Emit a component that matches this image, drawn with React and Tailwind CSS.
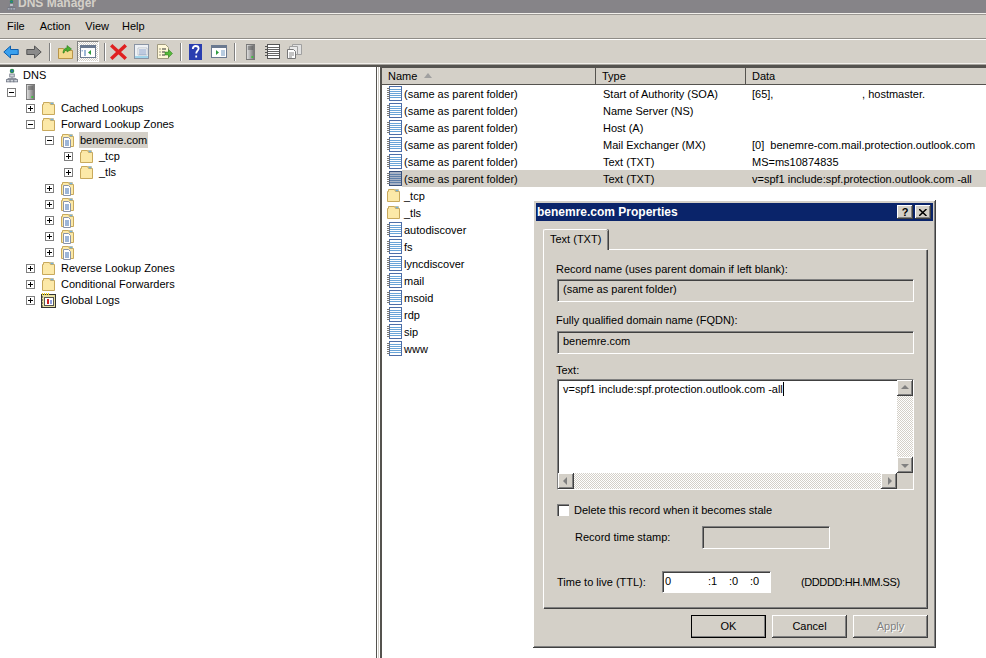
import React from 'react';

function Folder() {
  return (
    <svg width="15" height="15" viewBox="0 0 15 15" className="shrink-0">
      <path d="M1.5 13.5V3.5h1V1.5h6l1 2h4v10z" fill="#fbe7a6" stroke="#c8a95c" />
      <path d="M2.5 4.5h10v8h-10z" fill="#fce9a8" />
      <path d="M9 1.5h3.5v2H10z" fill="#6fb0e0" stroke="#c8a95c" strokeWidth="0.5" />
    </svg>
  );
}

function ZoneFolder() {
  return (
    <svg width="15" height="15" viewBox="0 0 15 15" className="shrink-0">
      <path d="M1.5 13.5V3.5h1V1.5h6l1 2h4v10z" fill="#fce9a8" stroke="#c8a95c" />
      <path d="M9 1.5h3.5v2H10z" fill="#6fb0e0" stroke="#c8a95c" strokeWidth="0.5" />
      <path d="M3.5 4.5h5l2 2v8h-7z" fill="#fff" stroke="#8a94a8" />
      <path d="M5 8h4M5 10h4M5 12h4" stroke="#3a6db0" />
    </svg>
  );
}

function RecordIcon({ selected }) {
  const line = selected ? '#5f7fa8' : '#6aa5d8';
  const body = selected ? '#a9b4c6' : '#fff';
  return (
    <svg width="15" height="15" viewBox="0 0 15 15" className="shrink-0">
      <rect x="2.5" y="0.5" width="12" height="14" fill={body} stroke={selected ? '#38507c' : '#4d6ea8'} />
      <path d="M3 3.5h11M3 5.5h11M3 7.5h11M3 9.5h11M3 11.5h11" stroke={line} />
      <path d="M0 2.5h3M0 4.5h3M0 6.5h3M0 8.5h3M0 10.5h3M0 12.5h3" stroke="#777" />
    </svg>
  );
}

function ServerIcon() {
  return (
    <svg width="9" height="16" viewBox="0 0 10 16" preserveAspectRatio="none" className="shrink-0">
      <defs>
        <linearGradient id="tower" x1="0" x2="1" y1="0" y2="0">
          <stop offset="0" stopColor="#e4e4e4" />
          <stop offset="1" stopColor="#6e6e6e" />
        </linearGradient>
      </defs>
      <rect x="0.5" y="0.5" width="9" height="15" fill="url(#tower)" stroke="#777" />
      <path d="M2 3h6M2 5h6" stroke="#555" />
      <rect x="6" y="12" width="2" height="2" fill="#3fc03f" />
    </svg>
  );
}

function DnsIcon({ w = 12, h = 15 }) {
  return (
    <svg width={w} height={h} viewBox="0 0 16 18" className="shrink-0">
      <circle cx="8" cy="3" r="3" fill="#2f8f4f" />
      <path d="M6.5 2h3v2h-3z" fill="#2a6fc0" />
      <rect x="5" y="7" width="6" height="4" fill="#cfd3da" stroke="#6b7280" />
      <path d="M8 11v2M2.5 15v-2h11v2" stroke="#6b7280" fill="none" />
      <rect x="0.5" y="14.5" width="5" height="3" fill="#cfd3da" stroke="#6b7280" />
      <rect x="5.5" y="14.5" width="5" height="3" fill="#cfd3da" stroke="#6b7280" />
      <rect x="10.5" y="14.5" width="5" height="3" fill="#cfd3da" stroke="#6b7280" />
    </svg>
  );
}

function LogIcon() {
  return (
    <svg width="15" height="15" viewBox="0 0 15 15" className="shrink-0">
      <rect x="0.5" y="1.5" width="14" height="13" fill="#e8e0a0" stroke="#333" />
      <path d="M1 1h8" stroke="#f0d020" strokeWidth="2" strokeDasharray="1 1" />
      <rect x="3.5" y="4.5" width="9" height="8" fill="#fff" stroke="#555" />
      <path d="M7 6v5" stroke="#d02020" strokeWidth="2" />
      <path d="M10 7v4" stroke="#2040c0" />
      <path d="M1 4h1M1 7h1M1 10h1M1 13h1" stroke="#333" />
    </svg>
  );
}

function Expander({ open }) {
  return (
    <span className="relative block w-[9px] h-[9px] shrink-0 border border-[#808080] bg-white">
      <span className="absolute left-[1px] top-[3px] w-[5px] h-px bg-black" />
      {!open && <span className="absolute left-[3px] top-[1px] w-px h-[5px] bg-black" />}
    </span>
  );
}

const treeRows = [
  { level: 0, icon: 'server', open: true },
  { level: 1, icon: 'folder', label: 'Cached Lookups' },
  { level: 1, icon: 'folder', label: 'Forward Lookup Zones', open: true },
  { level: 2, icon: 'zone', label: 'benemre.com', open: true, active: true },
  { level: 3, icon: 'folder', label: '_tcp' },
  { level: 3, icon: 'folder', label: '_tls' },
  { level: 2, icon: 'zone' },
  { level: 2, icon: 'zone' },
  { level: 2, icon: 'zone' },
  { level: 2, icon: 'zone' },
  { level: 2, icon: 'zone' },
  { level: 1, icon: 'folder', label: 'Reverse Lookup Zones' },
  { level: 1, icon: 'folder', label: 'Conditional Forwarders' },
  { level: 1, icon: 'log', label: 'Global Logs' },
];

const levelPad = ['pl-[7px]', 'pl-[26px]', 'pl-[45px]', 'pl-[64px]'];

function TreeRow({ row }) {
  return (
    <div className={`flex items-center h-4 ${levelPad[row.level]}`}>
      <Expander open={row.open} />
      {row.icon === 'server' && <span className="ml-[10px]"><ServerIcon /></span>}
      {row.icon === 'folder' && <span className="ml-[6px]"><Folder /></span>}
      {row.icon === 'zone' && <span className="ml-[6px]"><ZoneFolder /></span>}
      {row.icon === 'log' && <span className="ml-[6px]"><LogIcon /></span>}
      {row.label && (
        <span className={`ml-[4px] px-[1px] leading-4 ${row.active ? 'bg-[#d4d0c8]' : ''}`}>{row.label}</span>
      )}
    </div>
  );
}

const same = '(same as parent folder)';
const records = [
  { name: same, type: 'Start of Authority (SOA)', data: '[65],                             , hostmaster.' },
  { name: same, type: 'Name Server (NS)' },
  { name: same, type: 'Host (A)' },
  { name: same, type: 'Mail Exchanger (MX)', data: '[0]  benemre-com.mail.protection.outlook.com' },
  { name: same, type: 'Text (TXT)', data: 'MS=ms10874835' },
  { name: same, type: 'Text (TXT)', data: 'v=spf1 include:spf.protection.outlook.com -all', selected: true },
  { name: '_tcp', folder: true },
  { name: '_tls', folder: true },
  { name: 'autodiscover' },
  { name: 'fs' },
  { name: 'lyncdiscover' },
  { name: 'mail' },
  { name: 'msoid' },
  { name: 'rdp' },
  { name: 'sip' },
  { name: 'www' },
];

function RecordRow({ rec }) {
  return (
    <div className="flex items-center h-[17px] pl-[5px]">
      <span className="w-[15px] shrink-0">
        {rec.folder ? <span className="block -ml-px"><Folder /></span> : <RecordIcon selected={rec.selected} />}
      </span>
      <div className={`flex-1 grid grid-cols-[194px_150px_1fr] h-[17px] leading-[19px] whitespace-pre ${rec.selected ? 'bg-[#d4d0c8]' : ''}`}>
        <span className="pl-[2px]">{rec.name}</span>
        <span className="pl-[7px]">{rec.type}</span>
        <span className="pl-[6px]">{rec.data}</span>
      </div>
    </div>
  );
}

function ToolIcon({ children, pressed, className = '' }) {
  return (
    <span className={`flex items-center justify-center shrink-0 h-[21px] ${className} ${pressed ? 'border border-t-[#808080] border-l-[#808080] border-r-white border-b-white bg-[repeating-conic-gradient(#d4d0c8_0_25%,#fff_0_50%)] bg-[length:2px_2px]' : ''}`}>
      {children}
    </span>
  );
}

function ToolSep({ className = '' }) {
  return <span className={`shrink-0 w-[2px] h-[18px] border-l border-[#808080] bg-white ${className}`} />;
}

function Toolbar() {
  return (
    <div className="flex items-center h-[23px] pl-[3px]">
      <ToolIcon className="w-4">
        <svg width="16" height="14" viewBox="0 0 16 14"><path d="M.8 7 7.500 1v3.500h7.700v5H7.500V13z" fill="#39a0ee" stroke="#0d5fae" /></svg>
      </ToolIcon>
      <ToolIcon className="w-4 ml-[7px]">
        <svg width="16" height="14" viewBox="0 0 16 14"><path d="M15.200 7 8.500 1v3.500H.8v5h7.700V13z" fill="#8a8a8a" stroke="#555" /></svg>
      </ToolIcon>
      <ToolSep className="ml-[7px]" />
      <ToolIcon className="w-[15px] ml-[7px]">
        <svg width="15" height="15" viewBox="0 0 15 15">
          <path d="M.5 14.500v-10h5l1 2h8v8z" fill="#f3d88c" stroke="#b8954a" />
          <path d="M5 9c0-3 1.500-5 4-5V1.500L13.500 5 9 8V6C7.500 6 6.500 7 6 9z" fill="#49b02e" stroke="#2e7a1c" strokeWidth="0.6" />
        </svg>
      </ToolIcon>
      <ToolIcon pressed className="w-[22px] ml-[4px]">
        <svg width="16" height="13" viewBox="0 0 16 13">
          <rect x="0.500" y="0.500" width="15" height="12" fill="#fff" stroke="#6b7a90" />
          <path d="M1 1h14v2H1z" fill="#6b7a90" />
          <path d="M4 5h2v6H4zM1.500 5h1.500v1.500H1.500z" fill="#9db8d8" />
          <path d="M11 5v5L8 7.500z" fill="#2e9a3c" />
        </svg>
      </ToolIcon>
      <ToolSep className="ml-[5px]" />
      <ToolIcon className="w-[17px] ml-[4px]">
        <svg width="17" height="16" viewBox="0 0 17 16"><path d="M2.500 2.500 14.500 13.500M14.500 2.500 2.500 13.500" stroke="#e02020" strokeWidth="3.500" strokeLinecap="square" /></svg>
      </ToolIcon>
      <ToolIcon className="w-[15px] ml-[7px]">
        <svg width="15" height="15" viewBox="0 0 15 15">
          <rect x="0.500" y="0.500" width="14" height="14" fill="#eef1f5" stroke="#8a94a4" />
          <path d="M4 4h9v7H4z" fill="#fff" stroke="#a0a8b4" strokeWidth="0.6" />
          <path d="M5 6h7M5 8h7M5 10h7" stroke="#5a7ab0" strokeWidth="0.8" />
          <path d="M1 13h13" stroke="#55b8e0" />
        </svg>
      </ToolIcon>
      <ToolIcon className="w-4 ml-[8px]">
        <svg width="16" height="15" viewBox="0 0 16 15">
          <path d="M.5.500h8l3 3v11H.5z" fill="#fff8d8" stroke="#a09a80" />
          <path d="M2.500 5h1M5 5h4M2.500 8h1M5 8h3M2.500 11h1M5 11h3" stroke="#333" />
          <path d="M8 8h3.500V5.500L15.500 9.500l-4 4V11H8z" fill="#55b83a" stroke="#2e7a1c" strokeWidth="0.5" />
        </svg>
      </ToolIcon>
      <ToolSep className="ml-[7px]" />
      <ToolIcon className="w-[13px] ml-[7px]">
        <svg width="13" height="16" viewBox="0 0 13 16">
          <rect width="13" height="16" fill="#2a3eb0" />
          <path d="M3.800 5C3.800 3 5 2 6.700 2 8.500 2 9.600 3 9.600 4.500 9.600 6.500 7.200 6.800 7.200 9.500M7.200 11.500v2" stroke="#fff" strokeWidth="1.800" fill="none" />
        </svg>
      </ToolIcon>
      <ToolIcon className="w-4 ml-[9px]">
        <svg width="16" height="13" viewBox="0 0 16 13">
          <rect x="0.500" y="0.500" width="15" height="12" fill="#fff" stroke="#6b7a90" />
          <path d="M1 1h14v2H1z" fill="#6b7a90" />
          <path d="M5 5v5l3-2.500z" fill="#2e9a3c" />
          <path d="M10 5h4v6h-4z" fill="#b8cce0" />
        </svg>
      </ToolIcon>
      <ToolSep className="ml-[7px]" />
      <ToolIcon className="w-[10px] ml-[9px]"><ServerIcon /></ToolIcon>
      <ToolIcon className="w-[15px] ml-[10px]">
        <svg width="15" height="15" viewBox="0 0 15 15">
          <rect x="2.500" y="0.500" width="12" height="14" fill="#fff" stroke="#555" />
          <path d="M3 3.500h11M3 5.500h11M3 7.500h11M3 9.500h11M3 11.500h11" stroke="#666" />
          <path d="M0 2.500h3M0 5.500h3M0 8.500h3M0 11.500h3" stroke="#555" />
        </svg>
      </ToolIcon>
      <ToolIcon className="w-[15px] ml-[7px]">
        <svg width="15" height="15" viewBox="0 0 15 15">
          <path d="M5.500.500h9v10h-9z" fill="#e2e2e2" stroke="#a0a0a0" />
          <path d="M2.500 2.500h8v8h-8z" fill="#eaeaea" stroke="#a0a0a0" />
          <path d="M.500 5.500h6l2 2v7h-8z" fill="#fff" stroke="#777" />
          <path d="M2 9h5M2 11h5M2 13h3" stroke="#888" />
        </svg>
      </ToolIcon>
    </div>
  );
}

const sunken = 'border-t border-l border-t-[#808080] border-l-[#808080] border-r border-b border-r-white border-b-white shadow-[inset_1px_1px_0_#404040]';
const raised = 'shadow-[inset_-1px_-1px_0_#404040,inset_1px_1px_0_#fff,inset_-2px_-2px_0_#808080]';
const hatch = 'bg-[repeating-conic-gradient(#d4d0c8_0_25%,#fff_0_50%)] bg-[length:2px_2px]';

function ScrollBtn({ dir }) {
  const points = { up: '4,9 8,5 12,9', down: '4,7 8,11 12,7', left: '9,4 5,8 9,12', right: '7,4 11,8 7,12' };
  return (
    <span className={`block w-4 h-[16px] shrink-0 bg-[#d4d0c8] ${raised}`}>
      <svg width="16" height="16" viewBox="0 0 16 16"><polygon points={points[dir]} fill="#808080" /></svg>
    </span>
  );
}

function DialogButton({ children, strong, disabled }) {
  return (
    <span className={`flex items-center justify-center w-[75px] h-[23px] bg-[#d4d0c8] ${raised} ${strong ? 'outline outline-1 -outline-offset-1 outline-black' : ''} ${disabled ? 'text-[#808080] [text-shadow:1px_1px_0_#fff]' : ''}`}>
      {children}
    </span>
  );
}

function PropertiesDialog() {
  return (
    <div className={`absolute left-[533px] top-[200px] w-[403px] h-[448px] bg-[#d4d0c8] p-[3px] ${raised}`}>
      <div className="flex items-center justify-between h-[18px] bg-[#0a246a] pl-[1px] pr-[2px] text-white font-bold text-[12px]">
        <span>benemre.com Properties</span>
        <span className="flex gap-[2px]">
          <span className={`flex items-center justify-center w-4 h-[14px] bg-[#d4d0c8] text-black text-[11px] ${raised}`}>?</span>
          <span className={`flex items-center justify-center w-4 h-[14px] bg-[#d4d0c8] ${raised}`}>
            <svg width="8" height="7" viewBox="0 0 8 7"><path d="M0 0 7.500 7M7.500 0 0 7" stroke="#000" strokeWidth="1.500" /></svg>
          </span>
        </span>
      </div>
      <div className="ml-[7px] mt-[8px]">
        <div className="relative z-10 flex items-center w-[65px] h-[21px] -mb-px pl-[6px] pb-[2px] bg-[#d4d0c8] border-t border-l border-white rounded-t-[2px] shadow-[inset_-1px_0_0_#808080,1px_0_0_#404040]">
          Text (TXT)
        </div>
        <div className="w-[384px] h-[359px] px-[12px] pt-[12px] border-t border-l border-white shadow-[1px_1px_0_#404040,inset_-1px_-1px_0_#808080]">
          <div className="h-[14px] leading-[14px]">Record name (uses parent domain if left blank):</div>
          <div className={`ml-px mt-[3px] w-[357px] h-[23px] pl-[5px] leading-[18px] ${sunken}`}>{same}</div>
          <div className="mt-[11px] h-[14px] leading-[14px]">Fully qualified domain name (FQDN):</div>
          <div className={`ml-px mt-[4px] w-[357px] h-[23px] pl-[5px] leading-[18px] ${sunken}`}>benemre.com</div>
          <div className="mt-[9px] h-[14px] leading-[14px]">Text:</div>
          <div className={`ml-px mt-[2px] w-[357px] h-[111px] bg-white flex flex-col ${sunken}`}>
            <div className="flex flex-1 min-h-0">
              <div className="flex-1 pl-[5px] pt-[2px] leading-[14px]">
                v=spf1 include:spf.protection.outlook.com -all<span className="inline-block align-top w-px h-[14px] bg-black" />
              </div>
              <div className="flex flex-col w-4">
                <ScrollBtn dir="up" />
                <div className={`flex-1 ${hatch}`} />
                <ScrollBtn dir="down" />
              </div>
            </div>
            <div className="flex h-4">
              <ScrollBtn dir="left" />
              <div className={`flex-1 ${hatch}`} />
              <ScrollBtn dir="right" />
              <div className="w-4 bg-[#d4d0c8]" />
            </div>
          </div>
          <div className="ml-px mt-[14px] flex items-center h-[12px]">
            <span className="block w-[12px] h-[12px] bg-white border-t border-l border-[#808080] shadow-[inset_1px_1px_0_#404040]" />
            <span className="ml-[5px]">Delete this record when it becomes stale</span>
          </div>
          <div className="mt-[10px] flex items-center h-[23px]">
            <span className="w-[146px] pl-[19px]">Record time stamp:</span>
            <span className={`block w-[128px] h-[23px] ${sunken}`} />
          </div>
          <div className="mt-[22px] flex items-center h-[22px]">
            <span className="w-[106px] pl-px">Time to live (TTL):</span>
            <span className={`flex w-[109px] h-[22px] bg-white pl-[2px] leading-[18px] ${sunken}`}>
              <span className="w-[43px]">0</span>
              <span className="w-[21px]">:1</span>
              <span className="w-[21px]">:0</span>
              <span>:0</span>
            </span>
            <span className="ml-[30px] tracking-[-0.4px]">(DDDDD:HH.MM.SS)</span>
          </div>
        </div>
        <div className="mt-[7px] w-[385px] flex justify-end gap-[6px]">
          <DialogButton strong>OK</DialogButton>
          <DialogButton>Cancel</DialogButton>
          <DialogButton disabled>Apply</DialogButton>
        </div>
      </div>
    </div>
  );
}

export default function App() {
  return (
    <div className="relative flex flex-col w-[986px] h-[658px] overflow-hidden bg-[#d4d0c8] text-[11px] text-black font-['Liberation_Sans',sans-serif]">
      <div className="flex items-start h-[13px] pl-[7px] bg-[#868488] overflow-hidden">
        <span className="block -mt-[2px] shrink-0"><DnsIcon w={9} h={14} /></span>
        <span className="ml-[2px] text-[12px] font-bold leading-[13px] -translate-y-[3px] text-[#d4d0c8]">DNS Manager</span>
      </div>
      <div className="h-px bg-[#f2f0ec]" />
      <div className="h-px bg-[#9b9893]" />
      <div className="flex items-center gap-[15px] h-[23px] pl-[7px]">
        <span>File</span>
        <span>Action</span>
        <span>View</span>
        <span className="-ml-[2px]">Help</span>
      </div>
      <div className="h-px bg-[#8f8c87]" />
      <div className="h-px bg-white" />
      <Toolbar />
      <div className="h-px bg-[#f2f0ec]" />
      <div className="h-px bg-[#a5a29c]" />
      <div className="h-[2px] bg-[#55534f]" />
      <div className="flex flex-1 min-h-0">
        <div className="w-[376px] bg-white">
          <div className="flex items-center h-[17px] pl-[6px]">
            <DnsIcon />
            <span className="ml-[5px]">DNS</span>
          </div>
          {treeRows.map((row, i) => <TreeRow key={i} row={row} />)}
        </div>
        <div className="w-px bg-[#55534f]" />
        <div className="w-[3px] bg-[#d4d0c8] border-x border-white" />
        <div className="w-[2px] bg-[#55534f]" />
        <div className="flex-1 bg-white">
          <div className="grid grid-cols-[214px_150px_1fr] h-[18px] bg-[#d4d0c8] border-t border-[#55534f] border-b leading-[16px]">
            <span className="relative pl-[6px] border-r border-[#55534f]">
              Name
              <svg width="8" height="5" viewBox="0 0 8 5" className="absolute left-[42px] top-[5px]"><polygon points="0,5 4,0 8,5" fill="#a0a0a0" /></svg>
            </span>
            <span className="pl-[6px] border-r border-[#55534f]">Type</span>
            <span className="pl-[6px]">Data</span>
          </div>
          {records.map((rec, i) => <RecordRow key={i} rec={rec} />)}
        </div>
      </div>
      <PropertiesDialog />
    </div>
  );
}
